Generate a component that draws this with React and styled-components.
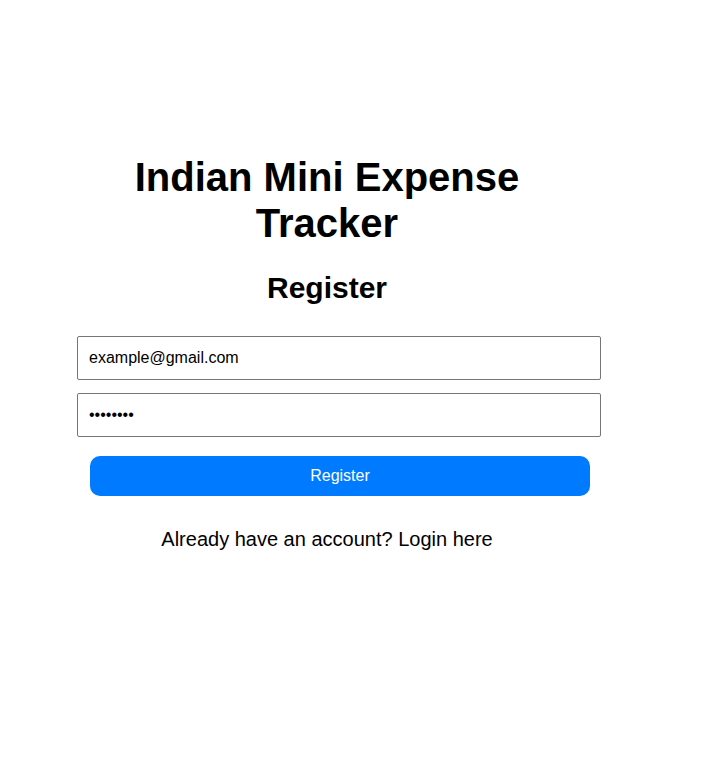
import React from 'react'
import styled, { createGlobalStyle } from 'styled-components'

const GlobalStyle = createGlobalStyle`
  html, body {
    margin: 0;
    padding: 0;
    background: #ffffff;
    font-family: "Liberation Sans", Arial, sans-serif;
    color: #000000;
  }
`

const Page = styled.div`
  padding: 154px 0 0 77px;
  min-height: 760px;
  box-sizing: border-box;
`

const Card = styled.div`
  width: 500px;
  text-align: center;
`

const Title = styled.h1`
  margin: 0;
  font-size: 40px;
  line-height: 46px;
  font-weight: 700;
`

const Heading = styled.h2`
  margin: 24px 0 0;
  font-size: 30px;
  line-height: 35px;
  font-weight: 700;
`

const Form = styled.form`
  width: 524px;
  margin-top: 31px;
  display: flex;
  flex-direction: column;
  align-items: center;
  gap: 13px;
`

const Input = styled.input`
  box-sizing: border-box;
  width: 100%;
  height: 44px;
  padding: 0 11px;
  border: 1px solid #767676;
  border-radius: 2px;
  font-family: "Liberation Sans", Arial, sans-serif;
  font-size: 16px;
  color: #000000;
  background: #ffffff;
  outline: none;
`

const Button = styled.button`
  box-sizing: border-box;
  width: 500px;
  height: 40px;
  margin-top: 6px;
  margin-left: 2px;
  border: none;
  border-radius: 10px;
  background-color: #007bff;
  color: #ffffff;
  font-family: "Liberation Sans", Arial, sans-serif;
  font-size: 16px;
  cursor: pointer;
`

const Footer = styled.p`
  margin: 32px 0 0;
  font-size: 20px;
  line-height: 23px;
`

const App = () => {
  return (
    <>
      <GlobalStyle />
      <Page>
        <Card>
          <Title>
            Indian Mini Expense
            <br />
            Tracker
          </Title>
          <Heading>Register</Heading>
          <Form onSubmit={(e) => e.preventDefault()}>
            <Input type="email" defaultValue="example@gmail.com" />
            <Input type="password" defaultValue="password" />
            <Button type="submit">Register</Button>
          </Form>
          <Footer>Already have an account? Login here</Footer>
        </Card>
      </Page>
    </>
  )
}

export default App
